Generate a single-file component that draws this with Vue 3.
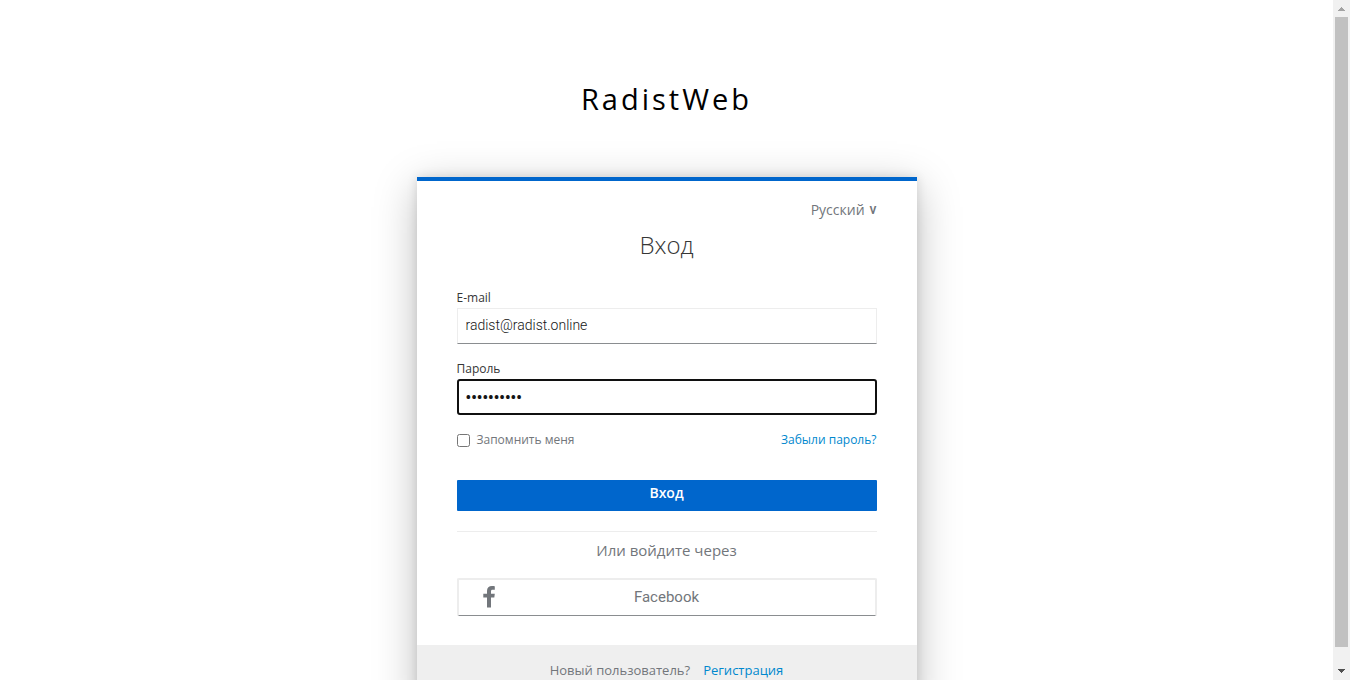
<script setup>
import { ref } from 'vue'

const email = ref('radist@radist.online')
const password = ref('radist2020')
const remember = ref(false)
</script>

<template>
  <div class="window">
    <main class="page">
      <header class="brand">RadistWeb</header>
      <section class="card">
        <div class="body">
          <div class="locale">
            <button type="button" class="locale-button"><span>Русский</span> <span class="chevron">v</span></button>
          </div>
          <h1 class="title">Вход</h1>
          <form class="form" @submit.prevent>
            <label class="label" for="email">E-mail</label>
            <input id="email" v-model="email" class="field" type="text" autocomplete="off" />
            <label class="label" for="password">Пароль</label>
            <input id="password" v-model="password" class="field active" type="password" autocomplete="off" />
            <div class="options">
              <label class="remember" for="remember">
                <input id="remember" v-model="remember" class="check" type="checkbox" />
                Запомнить меня
              </label>
              <a class="link" href="#">Забыли пароль?</a>
            </div>
            <button class="submit" type="submit">Вход</button>
          </form>
          <div class="social">
            <h2 class="social-title">Или войдите через</h2>
            <a class="provider" href="#">
              <svg class="provider-icon" viewBox="0 0 12 22" aria-hidden="true">
                <path d="M11.800 0.200v3.500H9.800c-1.500 0-1.800.7-1.800 1.700v2.400h3.800l-.5 3.800H8V21.500H4V11.600H.3V7.800H4V4.900C4 1.700 6 0 8.900 0c1.400 0 2.500.1 2.900.2z" />
              </svg>
              <span class="provider-name">Facebook</span>
            </a>
          </div>
        </div>
        <footer class="signup">
          <span>Новый пользователь?</span>
          <a class="link" href="#">Регистрация</a>
        </footer>
      </section>
    </main>
    <div class="scrollbar" aria-hidden="true">
      <svg class="arrow up" viewBox="0 0 17 17"><path d="M5 11V10H6V9H7V8H8V7H9V8H10V9H11V10H12V11z" /></svg>
      <div class="thumb"></div>
      <svg class="arrow down" viewBox="0 0 17 17"><path d="M5 6H12V7H11V8H10V9H9V10H8V9H7V8H6V7H5z" /></svg>
    </div>
  </div>
</template>

<style>
body {
  margin: 0;
  background: #fff;
}
</style>

<style scoped>
.window {
  display: flex;
  height: 100vh;
  overflow: hidden;
  font-family: "Open Sans", "Noto Sans", sans-serif;
  font-size: 12px;
  color: #72767b;
}
.page {
  flex: 1;
  min-width: 0;
}
.brand {
  padding: 61px 10px 41px;
  font-size: 29px;
  line-height: 75px;
  letter-spacing: 3px;
  text-align: center;
  color: #000;
}
.card {
  box-sizing: border-box;
  width: 100%;
  max-width: 500px;
  margin: 0 auto;
  border-top: 4px solid #06c;
  background: #fff;
  box-shadow: 0 0 10px rgba(0, 0, 0, 0.12), 0 10px 40px rgba(0, 0, 0, 0.25);
}
.body {
  padding: 18px 40px 29px;
}
.locale {
  display: flex;
  justify-content: flex-end;
}
.locale-button {
  display: flex;
  gap: 5px;
  padding: 0;
  border: 0;
  background: none;
  font: 14px/22px "Open Sans", "Noto Sans", sans-serif;
  color: #72767b;
}
.chevron {
  font-family: Roboto, sans-serif;
  font-weight: 500;
  line-height: 20px;
}
.title {
  margin: 8px 0 27px;
  font-size: 24px;
  font-weight: 300;
  line-height: 32px;
  text-align: center;
  color: #363636;
}
.form {
  display: flex;
  flex-direction: column;
}
.label {
  line-height: 20px;
  color: #363636;
}
.field {
  box-sizing: border-box;
  width: 100%;
  height: 36px;
  margin: 0 0 15px;
  padding: 0 8px 2px;
  border: 1px solid #ededed;
  border-bottom-color: #8a8d90;
  background: #fff;
  font: 300 14px/20px Roboto, sans-serif;
  color: #151515;
  outline: none;
}
.field.active {
  border: 2px solid #101010;
  border-radius: 3px;
  padding: 0 7px 2px;
  font: 600 15px/20px "Open Sans", sans-serif;
}
.options {
  display: flex;
  justify-content: space-between;
  line-height: 20px;
}
.remember {
  display: flex;
  align-items: center;
  gap: 7px;
}
.check {
  width: 13px;
  height: 13px;
  margin: 0;
}
.link {
  color: #0088ce;
  text-decoration: none;
}
.submit {
  height: 31px;
  margin: 30px 0 20px;
  padding: 0 0 6px;
  border: 0;
  border-radius: 1px;
  background: #06c;
  font: 600 14px/20px "Open Sans", sans-serif;
  color: #fff;
}
.social {
  border-top: 1px solid #ededed;
}
.social-title {
  margin: 7px 0 17px;
  font-size: 15px;
  font-weight: 400;
  line-height: 22px;
  text-align: center;
}
.provider {
  display: grid;
  grid-template-columns: 60px 1fr 60px;
  align-items: center;
  box-sizing: border-box;
  height: 38px;
  padding-bottom: 2px;
  border: 2px solid #ededed;
  border-bottom: 1px solid #8a8d90;
  border-radius: 2px;
  color: #72767b;
  text-decoration: none;
}
.provider-icon {
  justify-self: center;
  width: 12px;
  height: 22px;
  fill: #72767b;
}
.provider-name {
  font-family: Roboto, sans-serif;
  font-size: 15px;
  line-height: 22px;
  text-align: center;
}
.signup {
  display: flex;
  justify-content: center;
  gap: 13px;
  padding: 14px 40px 30px;
  background: #efefef;
  font-size: 13px;
  line-height: 22px;
}
.scrollbar {
  display: flex;
  flex-direction: column;
  width: 17px;
  background: #f1f1f1;
}
.thumb {
  flex: 1;
  margin: 0 2px 16px;
  background: #c1c1c1;
}
.arrow {
  width: 17px;
  height: 17px;
}
.up {
  fill: #a3a3a3;
}
.down {
  fill: #505050;
}
</style>
